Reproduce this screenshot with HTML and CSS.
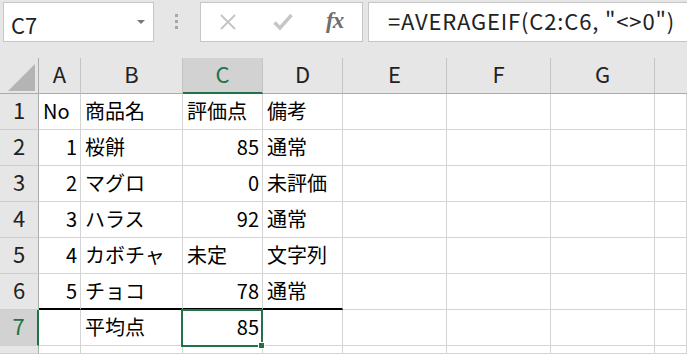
FILE: index.html
```html
<!DOCTYPE html>
<html lang="ja">
<head>
    <meta charset="UTF-8">
    <title>AVERAGEIF</title>
    <link rel="stylesheet" href="styles.css">
</head>
<body>
    <div class="toolbar">
        <div class="name-box">
            <span>C7</span>
            <span class="drop"></span>
        </div>
        <div class="dots"><i></i><i></i><i></i></div>
        <div class="fx-box">
            <svg class="ico" width="18" height="16" viewBox="0 0 18 16">
                <path d="M2 1 L16 15 M16 1 L2 15" stroke="#c6c6c6" stroke-width="2" fill="none"/>
            </svg>
            <svg class="ico" width="20" height="18" viewBox="0 0 20 18">
                <path d="M1.5 9.5 L7 15 L18.5 2" stroke="#c6c6c6" stroke-width="3.4" fill="none"/>
            </svg>
            <span class="fx">fx</span>
        </div>
        <div class="formula">=AVERAGEIF(C2:C6, "&lt;&gt;0")</div>
    </div>

    <div class="sheet">
        <div class="hdr corner"><div class="tri"></div></div>
        <div class="hdr">A</div>
        <div class="hdr">B</div>
        <div class="hdr sel-col">C</div>
        <div class="hdr">D</div>
        <div class="hdr">E</div>
        <div class="hdr">F</div>
        <div class="hdr">G</div>
        <div class="hdr last"></div>

        <div class="rh">1</div>
        <div class="cell">No</div>
        <div class="cell">商品名</div>
        <div class="cell">評価点</div>
        <div class="cell">備考</div>
        <div class="cell"></div><div class="cell"></div><div class="cell"></div><div class="cell"></div>

        <div class="rh">2</div>
        <div class="cell num">1</div>
        <div class="cell">桜餅</div>
        <div class="cell num">85</div>
        <div class="cell">通常</div>
        <div class="cell"></div><div class="cell"></div><div class="cell"></div><div class="cell"></div>

        <div class="rh">3</div>
        <div class="cell num">2</div>
        <div class="cell">マグロ</div>
        <div class="cell num">0</div>
        <div class="cell">未評価</div>
        <div class="cell"></div><div class="cell"></div><div class="cell"></div><div class="cell"></div>

        <div class="rh">4</div>
        <div class="cell num">3</div>
        <div class="cell">ハラス</div>
        <div class="cell num">92</div>
        <div class="cell">通常</div>
        <div class="cell"></div><div class="cell"></div><div class="cell"></div><div class="cell"></div>

        <div class="rh">5</div>
        <div class="cell num">4</div>
        <div class="cell">カボチャ</div>
        <div class="cell">未定</div>
        <div class="cell">文字列</div>
        <div class="cell"></div><div class="cell"></div><div class="cell"></div><div class="cell"></div>

        <div class="rh">6</div>
        <div class="cell num thick">5</div>
        <div class="cell thick">チョコ</div>
        <div class="cell num thick">78</div>
        <div class="cell thick">通常</div>
        <div class="cell"></div><div class="cell"></div><div class="cell"></div><div class="cell"></div>

        <div class="rh sel-row">7</div>
        <div class="cell"></div>
        <div class="cell">平均点</div>
        <div class="cell num active">85<div class="selection"><span class="handle"></span></div></div>
        <div class="cell"></div>
        <div class="cell"></div><div class="cell"></div><div class="cell"></div><div class="cell"></div>

        <div class="rh"></div>
        <div class="cell"></div><div class="cell"></div><div class="cell"></div><div class="cell"></div>
        <div class="cell"></div><div class="cell"></div><div class="cell"></div><div class="cell"></div>
    </div>
</body>
</html>
```

FILE: styles.css
```css
body {
    margin: 0;
    background-color: #ffffff;
    font-family: "Noto Sans CJK JP", "Noto Sans", sans-serif;
    color: #000;
    overflow: hidden;
}
.toolbar {
    display: flex;
    align-items: flex-start;
    height: 58px;
    padding: 2px 0 0 3px;
    box-sizing: border-box;
    background-color: #e6e6e6;
}
.name-box, .fx-box, .formula {
    height: 40px;
    box-sizing: border-box;
    background-color: #fff;
    border: 1px solid #c6c6c6;
}
.name-box {
    width: 151px;
    display: flex;
    align-items: center;
    justify-content: space-between;
    padding: 3px 8px 0 7px;
    font-size: 22px;
    color: #222;
}
.drop {
    width: 0;
    height: 0;
    border-left: 4px solid transparent;
    border-right: 4px solid transparent;
    border-top: 4px solid #777;
    margin-bottom: 4px;
}
.dots {
    display: flex;
    flex-direction: column;
    gap: 3px;
    margin: 12px 0 0 21px;
}
.dots i {
    width: 3px;
    height: 3px;
    background-color: #a6a6a6;
}
.fx-box {
    width: 163px;
    margin-left: 22px;
    display: flex;
    align-items: center;
    padding-left: 18px;
}
.fx-box .ico {
    margin-right: 36px;
}
.fx-box .ico + .ico {
    margin-right: 33px;
}
.fx {
    font-family: "Liberation Serif", serif;
    font-style: italic;
    font-weight: bold;
    font-size: 23px;
    color: #6e6e6e;
    letter-spacing: -1px;
    margin-top: -2px;
}
.formula {
    flex: 1;
    margin-left: 5px;
    border-right: none;
    padding: 0 0 4px 19px;
    font-size: 22px;
    line-height: 34px;
    letter-spacing: 0.85px;
    color: #222;
    white-space: nowrap;
}
.sheet {
    display: grid;
    grid-template-columns: 39px 42px 102px 80px 80px 104px 104px 104px 1fr;
    grid-template-rows: repeat(8, 36px) 8px;
    overflow: hidden;
}
.hdr, .rh, .cell {
    box-sizing: border-box;
    white-space: nowrap;
}
.hdr {
    background-color: #e6e6e6;
    border-right: 1px solid #c4c4c4;
    border-bottom: 1px solid #ababab;
    text-align: center;
    font-size: 22px;
    line-height: 30px;
    color: #222;
}
.hdr.last {
    border-right: none;
}
.corner {
    display: flex;
    justify-content: flex-end;
    align-items: flex-end;
    padding: 0 3px 2px 0;
    border-right-color: #ababab;
}
.tri {
    width: 27px;
    height: 27px;
    background-color: #b4b4b4;
    clip-path: polygon(100% 0, 100% 100%, 0 100%);
}
.sel-col {
    background-color: #d2d2d2;
    border-bottom: 2px solid #217346;
    color: #217346;
}
.rh {
    background-color: #e6e6e6;
    border-right: 1px solid #ababab;
    border-bottom: 1px solid #cfcfcf;
    text-align: center;
    font-size: 22px;
    line-height: 30px;
    color: #222;
}
.sel-row {
    background-color: #d2d2d2;
    border-right: 2px solid #217346;
    color: #217346;
}
.cell {
    border-right: 1px solid #d4d4d4;
    border-bottom: 1px solid #d4d4d4;
    padding: 0 3px 0 4px;
    font-size: 20px;
    line-height: 34px;
}
.num {
    text-align: right;
}
.thick {
    border-bottom: 2px solid #000;
}
.active {
    position: relative;
}
.selection {
    position: absolute;
    top: -1px;
    left: -2px;
    right: -1px;
    bottom: -2px;
    border: 2px solid #217346;
    z-index: 2;
}
.handle {
    position: absolute;
    right: -4px;
    bottom: -4px;
    width: 5px;
    height: 5px;
    background-color: #217346;
    border: 1px solid #fff;
}
```
